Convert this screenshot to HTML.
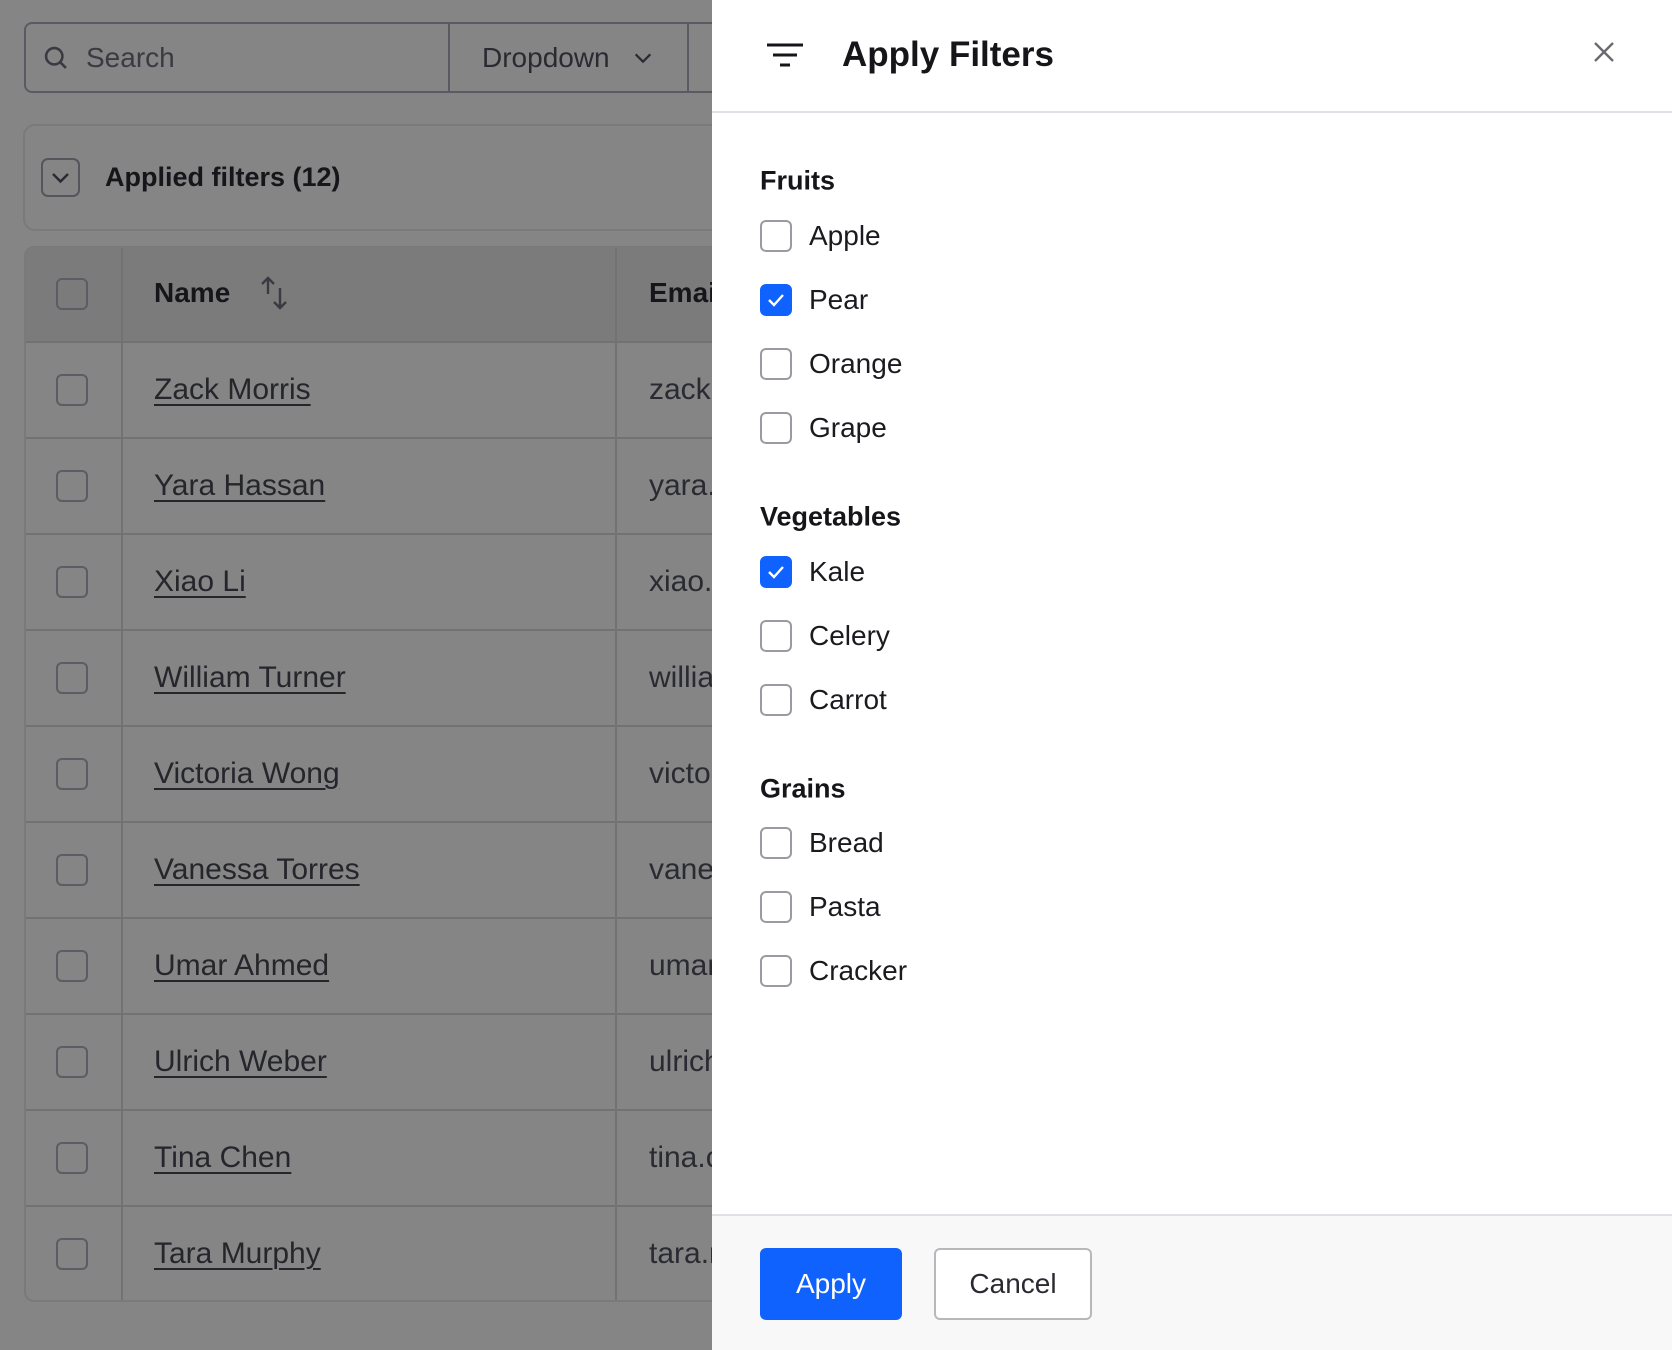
<!DOCTYPE html>
<html><head><meta charset="utf-8"><style>
*{box-sizing:border-box;margin:0;padding:0}
body{width:1672px;height:1350px;overflow:hidden;background:#858585;font-family:"Liberation Sans",Arial,sans-serif;position:relative;color:#1a1a1f}
.abs{position:absolute}
.search{left:24px;top:22px;width:760px;height:71px;border:2px solid #5a5a62;border-radius:8px;display:flex}
.search .s1{width:424px;border-right:2px solid #5a5a62;display:flex;align-items:center;padding-left:16px;font-size:28px;color:#3a3a42}
.search .s2{width:239px;border-right:2px solid #5a5a62;display:flex;align-items:center;padding-left:32px;font-size:28px;color:#2a2a32}
.card{left:23px;top:124px;width:720px;height:107px;border:2px solid #7a7a7a;border-radius:12px}
.chev{left:41px;top:158px;width:39px;height:39px;border:2px solid #55555c;border-radius:7px}
.aft{left:105px;top:162px;font-size:27px;font-weight:bold;color:#16161a}
.table{left:24px;top:246px;width:720px;height:1056px;border:2px solid #7a7a7a;border-radius:10px;overflow:hidden}
.hdr{position:absolute;left:0;top:0;width:100%;height:95px;background:#7b7b7b;border-bottom:2px solid #727272}
.vl{position:absolute;top:0;bottom:0;width:2px;background:#727272}
.row{position:absolute;left:0;width:100%;height:96px;border-bottom:2px solid #727272}
.cb{position:absolute;width:32px;height:32px;border:2px solid #5c5c64;border-radius:6px}
.nm{position:absolute;left:128px;font-size:30px;color:#25252c;text-decoration:underline;text-underline-offset:5px;text-decoration-thickness:2px}
.em{position:absolute;left:623px;font-size:30px;color:#2a2a32}
.panel{left:712px;top:0;width:960px;height:1350px;background:#fff}
.ph{position:absolute;left:0;top:0;width:100%;height:113px;border-bottom:2px solid #e0e0e6}
.ft{position:absolute;left:0;top:1214px;width:100%;height:136px;background:#f8f8f9;border-top:2px solid #e0e0e6}
.lab{position:absolute;left:48px;font-size:27px;font-weight:bold;color:#16161a;transform:translateY(-50%)}
.it{position:absolute;left:48px;height:32px;display:flex;align-items:center;transform:translateY(-50%)}
.box{width:32px;height:32px;border:2px solid #9a9aa2;border-radius:6px;margin-right:17px;display:flex;align-items:center;justify-content:center}
.box.on{background:#0f62fe;border-color:#0f62fe}
.it span{font-size:28px;color:#1a1a1f}
</style></head><body>
<div class="abs search"><div class="s1"><svg width="28" height="28" viewBox="0 0 24 24" fill="none" stroke="#3a3a42" stroke-width="2.2"><circle cx="10.5" cy="10.5" r="7"/><path d="M15.5 15.5l5 5"/></svg><span style="margin-left:16px">Search</span></div><div class="s2">Dropdown<svg style="margin-left:22px" width="22" height="22" viewBox="0 0 24 24" fill="none" stroke="#2a2a32" stroke-width="2.4"><path d="M4 8l8 8 8-8"/></svg></div></div>
<div class="abs card"></div>
<div class="abs chev"><svg width="35" height="35" viewBox="0 0 35 35" fill="none" stroke="#2a2a32" stroke-width="2.4"><path d="M10 14l7.5 7.5 7.5-7.5"/></svg></div>
<div class="abs aft">Applied filters (12)</div>
<div class="abs table">
<div class="hdr"><div class="cb" style="left:30px;top:30px"></div><div style="position:absolute;left:128px;top:29px;font-size:28px;font-weight:bold;color:#16161a">Name</div>
<svg style="position:absolute;left:232px;top:26px" width="34" height="38" viewBox="0 0 34 38" fill="none" stroke="#3a3a42" stroke-width="2.4"><path d="M10 20V4M4 10l6-6 6 6M22 14v20M16 28l6 6 6-6"/></svg>
<div style="position:absolute;left:623px;top:29px;font-size:28px;font-weight:bold;color:#16161a">Email</div></div>
<div class="vl" style="left:95px"></div><div class="vl" style="left:589px"></div>
</div>
<div class="abs panel">
<div class="ph"><svg style="position:absolute;left:54px;top:42px" width="38" height="26" viewBox="0 0 38 26" fill="none" stroke="#16161a" stroke-width="3"><path d="M1 3h36M7 13h24M14 23h10"/></svg>
<div style="position:absolute;left:130px;top:35px;font-size:35px;font-weight:bold;color:#16161a">Apply Filters</div>
<svg style="position:absolute;left:882px;top:42px" width="20" height="20" viewBox="0 0 20 20" stroke="#6a6a70" stroke-width="2.4"><path d="M1 1l18 18M19 1L1 19"/></svg></div>
<div class="lab" style="top:181px">Fruits</div>
<div class="it" style="top:236px"><div class="box"></div><span>Apple</span></div>
<div class="it" style="top:300px"><div class="box on"><svg width="18" height="14" viewBox="0 0 18 14" fill="none" stroke="#fff" stroke-width="2.4"><path d="M2 7l5 5 9-10"/></svg></div><span>Pear</span></div>
<div class="it" style="top:364px"><div class="box"></div><span>Orange</span></div>
<div class="it" style="top:428px"><div class="box"></div><span>Grape</span></div>
<div class="lab" style="top:517px">Vegetables</div>
<div class="it" style="top:572px"><div class="box on"><svg width="18" height="14" viewBox="0 0 18 14" fill="none" stroke="#fff" stroke-width="2.4"><path d="M2 7l5 5 9-10"/></svg></div><span>Kale</span></div>
<div class="it" style="top:636px"><div class="box"></div><span>Celery</span></div>
<div class="it" style="top:700px"><div class="box"></div><span>Carrot</span></div>
<div class="lab" style="top:789px">Grains</div>
<div class="it" style="top:843px"><div class="box"></div><span>Bread</span></div>
<div class="it" style="top:907px"><div class="box"></div><span>Pasta</span></div>
<div class="it" style="top:971px"><div class="box"></div><span>Cracker</span></div>
<div class="ft">
<div style="position:absolute;left:48px;top:32px;width:142px;height:72px;background:#0f62fe;border-radius:6px;color:#fff;font-size:28px;display:flex;align-items:center;justify-content:center">Apply</div>
<div style="position:absolute;left:222px;top:32px;width:158px;height:72px;background:#fff;border:2px solid #b8b8bc;border-radius:6px;color:#2a2a32;font-size:28px;display:flex;align-items:center;justify-content:center">Cancel</div>
</div>
</div>
<script>
var n=[["Zack Morris","zack."],["Yara Hassan","yara."],["Xiao Li","xiao.l"],["William Turner","willia"],["Victoria Wong","victo"],["Vanessa Torres","vanes"],["Umar Ahmed","umar"],["Ulrich Weber","ulrich"],["Tina Chen","tina.c"],["Tara Murphy","tara.r"]];
var t=document.querySelector('.table'),h='';
for(var i=0;i<10;i++){var y=95+i*96;h+='<div class="row" style="top:'+y+'px;'+(i==9?'border-bottom:none':'')+'"><div class="cb" style="left:30px;top:31px"></div><div class="nm" style="top:30px">'+n[i][0]+'</div><div class="em" style="top:30px">'+n[i][1]+'</div></div>';}
t.insertAdjacentHTML('beforeend',h);
</script>
</body></html>
